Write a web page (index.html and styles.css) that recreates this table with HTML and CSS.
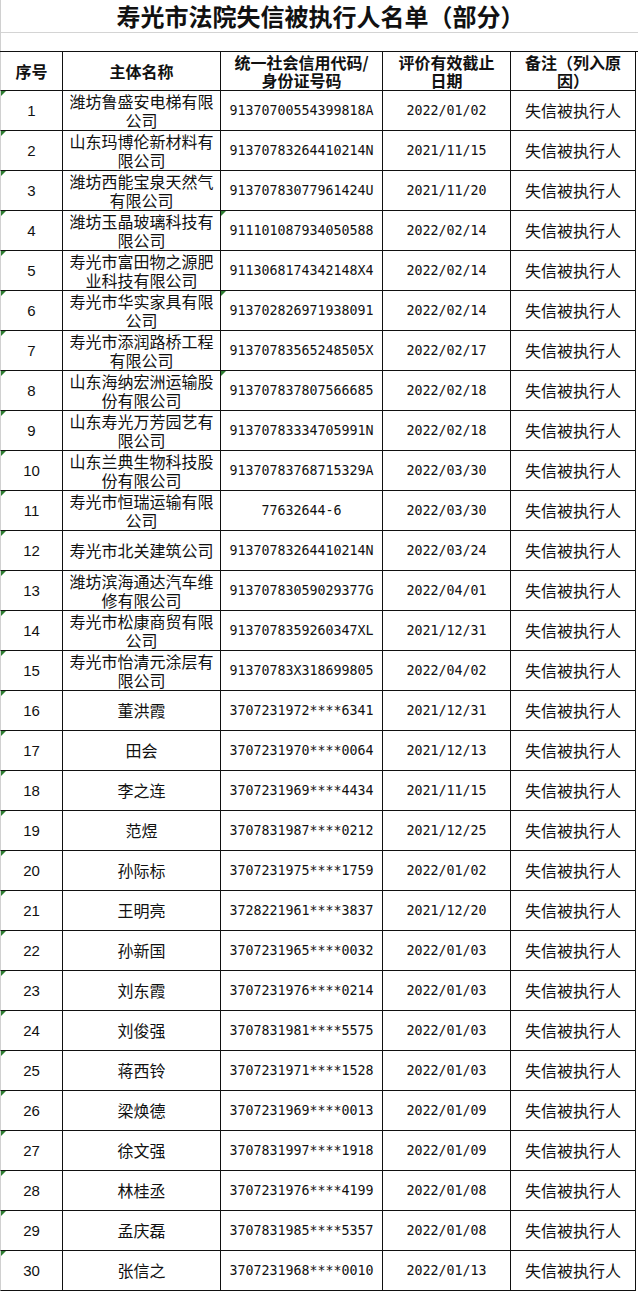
FILE: index.html
```html
<!DOCTYPE html>
<html lang="zh-CN">
<head>
<meta charset="utf-8">
<title>寿光市法院失信被执行人名单（部分）</title>
<link rel="stylesheet" href="styles.css">
</head>
<body>
<div class="sheet">
  <div class="title">寿光市法院失信被执行人名单（部分）</div>
  <div class="blank"></div>
  <div class="grid">
    <div class="hd">序号</div>
    <div class="hd">主体名称</div>
    <div class="hd">统一社会信用代码/<br>身份证号码</div>
    <div class="hd">评价有效截止<br>日期</div>
    <div class="hd">备注（列入原<br>因）</div>

    <div class="c n mark">1</div><div class="c">潍坊鲁盛安电梯有限公司</div><div class="c m">91370700554399818A</div><div class="c m">2022/01/02</div><div class="c">失信被执行人</div>
    <div class="c n mark">2</div><div class="c">山东玛博伦新材料有限公司</div><div class="c m">91370783264410214N</div><div class="c m">2021/11/15</div><div class="c">失信被执行人</div>
    <div class="c n mark">3</div><div class="c">潍坊西能宝泉天然气有限公司</div><div class="c m">91370783077961424U</div><div class="c m">2021/11/20</div><div class="c">失信被执行人</div>
    <div class="c n mark">4</div><div class="c">潍坊玉晶玻璃科技有限公司</div><div class="c m mark">911101087934050588</div><div class="c m">2022/02/14</div><div class="c">失信被执行人</div>
    <div class="c n mark">5</div><div class="c">寿光市富田物之源肥业科技有限公司</div><div class="c m">9113068174342148X4</div><div class="c m">2022/02/14</div><div class="c">失信被执行人</div>
    <div class="c n mark">6</div><div class="c">寿光市华实家具有限公司</div><div class="c m mark">913702826971938091</div><div class="c m">2022/02/14</div><div class="c">失信被执行人</div>
    <div class="c n mark">7</div><div class="c">寿光市添润路桥工程有限公司</div><div class="c m">91370783565248505X</div><div class="c m">2022/02/17</div><div class="c">失信被执行人</div>
    <div class="c n mark">8</div><div class="c">山东海纳宏洲运输股份有限公司</div><div class="c m mark">913707837807566685</div><div class="c m">2022/02/18</div><div class="c">失信被执行人</div>
    <div class="c n mark">9</div><div class="c">山东寿光万芳园艺有限公司</div><div class="c m">91370783334705991N</div><div class="c m">2022/02/18</div><div class="c">失信被执行人</div>
    <div class="c n mark">10</div><div class="c">山东兰典生物科技股份有限公司</div><div class="c m">91370783768715329A</div><div class="c m">2022/03/30</div><div class="c">失信被执行人</div>
    <div class="c n mark">11</div><div class="c">寿光市恒瑞运输有限公司</div><div class="c m">77632644-6</div><div class="c m">2022/03/30</div><div class="c">失信被执行人</div>
    <div class="c n mark">12</div><div class="c">寿光市北关建筑公司</div><div class="c m">91370783264410214N</div><div class="c m">2022/03/24</div><div class="c">失信被执行人</div>
    <div class="c n mark">13</div><div class="c">潍坊滨海通达汽车维修有限公司</div><div class="c m">91370783059029377G</div><div class="c m">2022/04/01</div><div class="c">失信被执行人</div>
    <div class="c n mark">14</div><div class="c">寿光市松康商贸有限公司</div><div class="c m">9137078359260347XL</div><div class="c m">2021/12/31</div><div class="c">失信被执行人</div>
    <div class="c n mark">15</div><div class="c">寿光市怡清元涂层有限公司</div><div class="c m">91370783X318699805</div><div class="c m">2022/04/02</div><div class="c">失信被执行人</div>
    <div class="c n mark">16</div><div class="c">董洪霞</div><div class="c m">3707231972****6341</div><div class="c m">2021/12/31</div><div class="c">失信被执行人</div>
    <div class="c n mark">17</div><div class="c">田会</div><div class="c m">3707231970****0064</div><div class="c m">2021/12/13</div><div class="c">失信被执行人</div>
    <div class="c n mark">18</div><div class="c">李之连</div><div class="c m">3707231969****4434</div><div class="c m">2021/11/15</div><div class="c">失信被执行人</div>
    <div class="c n mark">19</div><div class="c">范煜</div><div class="c m">3707831987****0212</div><div class="c m">2021/12/25</div><div class="c">失信被执行人</div>
    <div class="c n mark">20</div><div class="c">孙际标</div><div class="c m">3707231975****1759</div><div class="c m">2022/01/02</div><div class="c">失信被执行人</div>
    <div class="c n mark">21</div><div class="c">王明亮</div><div class="c m">3728221961****3837</div><div class="c m">2021/12/20</div><div class="c">失信被执行人</div>
    <div class="c n mark">22</div><div class="c">孙新国</div><div class="c m">3707231965****0032</div><div class="c m">2022/01/03</div><div class="c">失信被执行人</div>
    <div class="c n mark">23</div><div class="c">刘东霞</div><div class="c m">3707231976****0214</div><div class="c m">2022/01/03</div><div class="c">失信被执行人</div>
    <div class="c n mark">24</div><div class="c">刘俊强</div><div class="c m">3707831981****5575</div><div class="c m">2022/01/03</div><div class="c">失信被执行人</div>
    <div class="c n mark">25</div><div class="c">蒋西铃</div><div class="c m">3707231971****1528</div><div class="c m">2022/01/03</div><div class="c">失信被执行人</div>
    <div class="c n mark">26</div><div class="c">梁焕德</div><div class="c m">3707231969****0013</div><div class="c m">2022/01/09</div><div class="c">失信被执行人</div>
    <div class="c n mark">27</div><div class="c">徐文强</div><div class="c m">3707831997****1918</div><div class="c m">2022/01/09</div><div class="c">失信被执行人</div>
    <div class="c n mark">28</div><div class="c">林桂丞</div><div class="c m">3707231976****4199</div><div class="c m">2022/01/08</div><div class="c">失信被执行人</div>
    <div class="c n mark">29</div><div class="c">孟庆磊</div><div class="c m">3707831985****5357</div><div class="c m">2022/01/08</div><div class="c">失信被执行人</div>
    <div class="c n mark">30</div><div class="c">张信之</div><div class="c m">3707231968****0010</div><div class="c m">2022/01/13</div><div class="c">失信被执行人</div>
  </div>
</div>
</body>
</html>
```

FILE: styles.css
```css
html, body {
  margin: 0;
  padding: 0;
  background: #ffffff;
}

.sheet {
  width: 638px;
  min-height: 1291px;
  box-sizing: border-box;
  border-left: 1px solid #d0d0d0;
  color: #111;
  font-family: "Noto Sans CJK SC", "Noto Sans", sans-serif;
}

.title {
  height: 33px;
  box-sizing: border-box;
  border-bottom: 1px solid #d4d4d4;
  display: flex;
  align-items: center;
  justify-content: center;
  font-size: 24px;
  font-weight: 700;
  line-height: 32px;
  padding-left: 2px;
}

.blank {
  height: 18px;
}

.grid {
  display: grid;
  grid-template-columns: 63px 158px 162px 128px 125px;
  grid-template-rows: 39px;
  grid-auto-rows: 40px;
  border-top: 1px solid #111;
  margin-left: -1px;
}

.hd, .c {
  box-sizing: border-box;
  border-right: 1px solid #111;
  border-bottom: 1px solid #111;
  display: flex;
  align-items: center;
  justify-content: center;
  text-align: center;
  overflow: hidden;
  position: relative;
}

.grid > :nth-child(5n+1) {
  border-left: 1px solid #d0d0d0;
}

.hd {
  font-size: 16px;
  font-weight: 700;
  line-height: 18px;
}

.c {
  font-size: 16px;
  line-height: 19px;
  padding: 0 6px;
}

.n {
  font-family: "Liberation Sans", Arial, sans-serif;
  font-size: 15px;
}

.m {
  font-family: "DejaVu Sans Mono", "Liberation Mono", monospace;
  font-size: 13.3px;
  letter-spacing: 0;
  padding: 0 2px;
  white-space: nowrap;
}

.mark::before {
  content: "";
  position: absolute;
  left: 0;
  top: 0;
  width: 0;
  height: 0;
  border-top: 5px solid #2e7d32;
  border-right: 5px solid transparent;
}
```
